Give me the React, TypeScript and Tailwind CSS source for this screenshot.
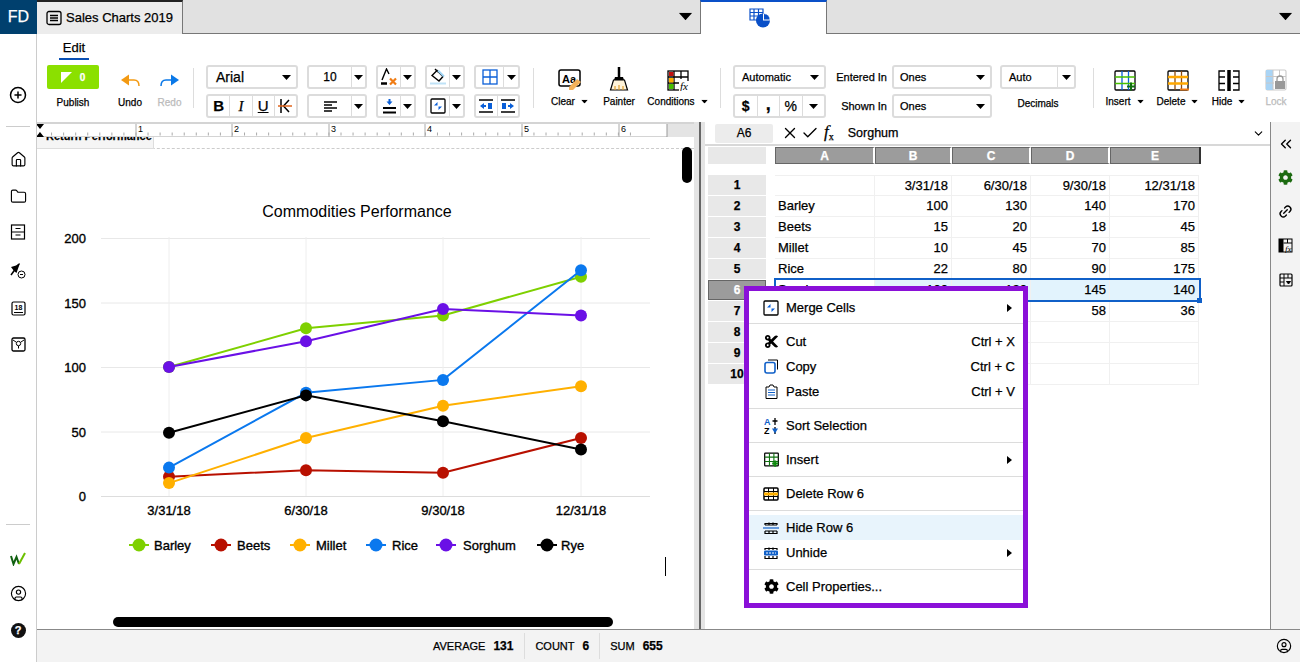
import type { ReactNode } from "react";
import { CirclePlus, House, Folder, CircleUser, Link2, ChevronDown, ChevronsLeft, X, Check } from "lucide-react";
import { FaCog, FaCut } from "react-icons/fa";

const Caret = ({ className = "" }: { className?: string }) => (
  <svg width="9" height="5" viewBox="0 0 9 5" className={className}>
    <path d="M0 0h9L4.5 5z" fill="#000" />
  </svg>
);

const Fx = () => (
  <span className="font-['Liberation_Serif'] italic text-[17px] leading-none text-black">
    f<sub className="text-[10px] not-italic">x</sub>
  </span>
);

// ---- toolbar icons ----
const icons: Record<string, ReactNode> = {
  doc: (
    <svg width="16" height="16" viewBox="0 0 16 16" fill="none" stroke="#000" strokeWidth="1.3">
      <rect x="1" y="1.5" width="14" height="13" rx="2" />
      <path d="M4 5.5h8M4 8h8M4 10.5h8" />
    </svg>
  ),
  sheetPie: (
    <svg width="22" height="20" viewBox="0 0 22 20">
      <path d="M1 1h13v11H1z" fill="#fff" stroke="#0a50c8" strokeWidth="1.2" />
      <path d="M1 4.5h13M1 8h13M5 1v11M9.5 1v11" stroke="#0a50c8" strokeWidth="1.2" />
      <circle cx="14" cy="12.5" r="7" fill="#0a50c8" />
      <path d="M14 12.5V5.5a7 7 0 0 1 7 7z" fill="#fff" />
      <path d="M15 11.5V6a6 6 0 0 1 5.5 5.5z" fill="#0a50c8" />
    </svg>
  ),
  undo: (
    <svg width="21" height="18" viewBox="0 0 21 18" fill="none">
      <path d="M1 7l8-5.5v11z" fill="#f39a12" />
      <path d="M8 7h6c3.5 0 5 2.5 5 6" stroke="#f39a12" strokeWidth="1.5" />
    </svg>
  ),
  redo: (
    <svg width="21" height="18" viewBox="0 0 21 18" fill="none">
      <path d="M20 7l-8-5.5v11z" fill="#0a78e8" />
      <path d="M13 7H7c-3.5 0-5 2.5-5 6" stroke="#0a78e8" strokeWidth="1.5" />
    </svg>
  ),
  textColor: (
    <svg width="18" height="18" viewBox="0 0 18 18" fill="none">
      <path d="M2 12L6.5 1 9 6" stroke="#000" strokeWidth="1.4" />
      <path d="M1 15.5h6" stroke="#000" strokeWidth="2.5" />
      <path d="M10 10.5l6 6M16 10.5l-6 6" stroke="#f07c14" strokeWidth="2.2" />
    </svg>
  ),
  fill: (
    <svg width="18" height="18" viewBox="0 0 18 18" fill="none">
      <path d="M3 7.5l5-5 6 6-4 4.5z" stroke="#000" strokeWidth="1.4" />
      <path d="M6 1l3 3" stroke="#000" strokeWidth="1.4" />
      <path d="M9 2.5l6 6" stroke="#9fd4f5" strokeWidth="2" />
      <path d="M1 15.5h16" stroke="#bfe2f7" strokeWidth="2" />
    </svg>
  ),
  border: (
    <svg width="16" height="16" viewBox="0 0 16 16" fill="none" stroke="#0a5fd8" strokeWidth="1.3">
      <rect x="1" y="1" width="14" height="14" />
      <path d="M8 1v14M1 8h14" />
    </svg>
  ),
  strike: (
    <svg width="14" height="14" viewBox="0 0 14 14" fill="none" strokeWidth="1.5">
      <path d="M3 0v14M11 1L5.5 7l5.5 6" stroke="#000" />
      <path d="M0 7h14" stroke="#e0641c" />
    </svg>
  ),
  align: (
    <svg width="13" height="11" viewBox="0 0 13 11" stroke="#000" strokeWidth="1.5">
      <path d="M0 1h13M0 4h8M0 7h13M0 10h8" />
    </svg>
  ),
  valign: (
    <svg width="13" height="15" viewBox="0 0 13 15">
      <path d="M6.5 6L3.5 2.5h2V0h2v2.5h2z" fill="#0a5fd8" />
      <path d="M0 9h13M0 13.5h13" stroke="#000" strokeWidth="1.8" />
    </svg>
  ),
  merge: (
    <svg width="16" height="16" viewBox="0 0 16 16" fill="none">
      <rect x="1" y="1" width="14" height="14" rx="1" stroke="#000" strokeWidth="1.3" />
      <path d="M4 7.5L7.5 4v3.5zM12 8.5L8.5 12V8.5z" fill="#0a5fd8" />
    </svg>
  ),
  indentL: (
    <svg width="14" height="14" viewBox="0 0 14 14">
      <path d="M0 1h14M0 13h14" stroke="#000" strokeWidth="1.5" />
      <path d="M1 7l4-3v6z M5 6h2v2H5z" fill="#0a5fd8" />
      <path d="M9 4h4v6H9z" fill="#0a5fd8" />
    </svg>
  ),
  indentR: (
    <svg width="14" height="14" viewBox="0 0 14 14">
      <path d="M0 1h14M0 13h14" stroke="#000" strokeWidth="1.5" />
      <path d="M13 7l-4-3v6z M7 6h2v2H7z" fill="#0a5fd8" />
      <path d="M1 4h4v6H1z" fill="#0a5fd8" />
    </svg>
  ),
  clear: (
    <svg width="24" height="22" viewBox="0 0 24 22" fill="none">
      <rect x="1" y="1" width="21" height="16" rx="2" stroke="#000" strokeWidth="1.5" />
      <text x="4" y="13.5" fontSize="11" fontWeight="700" fill="#000" fontFamily="Liberation Sans">Aa</text>
      <path d="M11 18l8-8 4 3-8 8h-4z" fill="#f3b15a" />
    </svg>
  ),
  painter: (
    <svg width="20" height="24" viewBox="0 0 20 24" fill="none">
      <path d="M10 0v10" stroke="#000" strokeWidth="2.5" />
      <path d="M6 10h8l1 3H5z" fill="#000" />
      <path d="M4.5 13h11l3 10h-17z" fill="#fff3d8" stroke="#000" strokeWidth="1.2" />
      <path d="M6 23v-4M10 23v-5M14 23v-4" stroke="#e0a030" strokeWidth="1.2" />
    </svg>
  ),
  conditions: (
    <svg width="22" height="21" viewBox="0 0 22 21" fill="none">
      <rect x="1" y="1" width="20" height="19" stroke="#000" strokeWidth="1.3" />
      <path d="M7 1v19M14 1v8M1 7h20M1 13h13" stroke="#000" strokeWidth="1.3" />
      <rect x="2" y="2" width="4.5" height="4" fill="#c01010" />
      <rect x="2" y="8" width="4.5" height="4.5" fill="#ffb000" />
      <rect x="2" y="14" width="4.5" height="5" fill="#46c000" />
      <rect x="12" y="11" width="10" height="10" fill="#fff" />
      <text x="13" y="20" fontSize="11" fontStyle="italic" fill="#000" fontFamily="Liberation Serif">fx</text>
    </svg>
  ),
  insert: (
    <svg width="22" height="21" viewBox="0 0 22 21" fill="none">
      <rect x="1" y="1" width="20" height="19" rx="1" stroke="#000" strokeWidth="1.3" />
      <path d="M8 1v19M14.5 1v19" stroke="#0a5fd8" strokeWidth="1.3" />
      <path d="M1 7h20M1 13.5h20" stroke="#46c000" strokeWidth="1.5" />
      <path d="M13 16.5h8M17 12.5v8" stroke="#107010" strokeWidth="2" />
    </svg>
  ),
  del: (
    <svg width="22" height="21" viewBox="0 0 22 21" fill="none">
      <rect x="1" y="1" width="20" height="19" rx="1" stroke="#000" strokeWidth="1.3" />
      <path d="M8 1v19M14.5 1v19" stroke="#8a4a10" strokeWidth="1.3" />
      <path d="M1 7h20M1 13.5h20" stroke="#ffa800" strokeWidth="2.5" />
      <path d="M13 19.5h9" stroke="#f07c14" strokeWidth="2" />
    </svg>
  ),
  hide: (
    <svg width="22" height="21" viewBox="0 0 22 21" fill="none" stroke="#000" strokeWidth="1.3">
      <path d="M7 1H1v19h6M15 1h6v19h-6" />
      <path d="M1 7h6M1 13.5h6M15 7h6M15 13.5h6" />
      <path d="M11 0v21" strokeWidth="3.5" />
    </svg>
  ),
  lock: (
    <svg width="22" height="22" viewBox="0 0 22 22" fill="none">
      <rect x="1" y="1" width="20" height="20" rx="1.5" stroke="#ccc" strokeWidth="1.2" />
      <rect x="1" y="1" width="7" height="20" fill="#a9d4f5" />
      <path d="M1 7.5h20M1 14h8M8 1v20M14.5 1v6" stroke="#c8c8c8" />
      <path d="M12 12v-2a3 3 0 0 1 6 0v2" stroke="#999" strokeWidth="1.3" />
      <rect x="10" y="12" width="10" height="8" fill="#999" />
    </svg>
  ),
};

// ---- small toolbar parts ----
const Box = ({ w, children, className = "" }: { w: string; children: ReactNode; className?: string }) => (
  <div className={`${w} h-[24px] flex items-stretch border-2 border-[#dcdcdc] rounded-[3px] bg-white ${className}`}>{children}</div>
);

const Seg = ({ children, className = "" }: { children: ReactNode; className?: string }) => (
  <div className={`flex items-center justify-center border-l border-[#dcdcdc] first:border-l-0 ${className}`}>{children}</div>
);

const IconDrop = ({ w, icon, split }: { w: string; icon: ReactNode; split: string }) => (
  <Box w={w}>
    <Seg className={split}>{icon}</Seg>
    <Seg className="flex-1"><Caret /></Seg>
  </Box>
);

const Select = ({ w, label, pad = "pl-[6px] pr-[5px]" }: { w: string; label: string; pad?: string }) => (
  <Box w={w}>
    <div className={`flex-1 flex items-center justify-between text-[12px] ${pad}`}>
      <span>{label}</span>
      <Caret />
    </div>
  </Box>
);

const Divider = ({ className }: { className: string }) => <div className={`w-px h-[40px] mt-[3px] bg-[#ddd] ${className}`} />;

const BigTool = ({ w, icon, label, menu, muted }: { w: string; icon: ReactNode; label: string; menu?: boolean; muted?: boolean }) => (
  <div className={`${w} flex flex-col items-center`}>
    <div className="h-[26px] flex items-end">{icon}</div>
    <div className={`mt-[3px] h-[14px] flex items-center gap-[5px] text-[10px] ${muted ? "text-[#bbb]" : "text-black"}`}>
      {label}
      {menu && <Caret className="scale-75" />}
    </div>
  </div>
);

const Ribbon = () => (
  <div className="h-[88px] shrink-0 bg-white flex flex-col">
    <div className="h-[31px] shrink-0 pl-[22px] pt-[7px]">
      <div className="w-[30px] h-[19px] border-b-2 border-[#0a50b4] text-center text-[13px] leading-[14px]">Edit</div>
    </div>
    <div className="flex pl-[10px]">
      <div className="w-[52px] flex flex-col items-center">
        <div className="w-full h-[24px] bg-[#8be000] rounded-[2px] flex items-center justify-center gap-[8px]">
          <svg width="11" height="11" viewBox="0 0 11 11"><path d="M0 0h11L0 11z" fill="#fff" /></svg>
          <span className="text-white text-[10px] font-bold">0</span>
        </div>
        <div className="mt-[6px] text-[10px]">Publish</div>
      </div>
      <div className="w-[40px] ml-[11px] flex flex-col items-center">
        <div className="h-[24px] flex items-end mt-[2px]">{icons.undo}</div>
        <div className="mt-[4px] text-[10px]">Undo</div>
      </div>
      <div className="w-[39px] flex flex-col items-center">
        <div className="h-[24px] flex items-end mt-[2px]">{icons.redo}</div>
        <div className="mt-[4px] text-[10px] text-[#bbb]">Redo</div>
      </div>
      <Divider className="ml-[4px]" />
      <div className="ml-[12px] w-[92px] flex flex-col gap-[5px]">
        <Select w="w-full" label="Arial" pad="pl-[8px] pr-[5px] text-[14px]" />
        <Box w="w-full">
          <Seg className="flex-1 font-bold text-[15px]">B</Seg>
          <Seg className="flex-1 italic text-[15px] font-['Liberation_Serif']">I</Seg>
          <Seg className="flex-1 underline text-[15px]">U</Seg>
          <Seg className="flex-1">{icons.strike}</Seg>
        </Box>
      </div>
      <div className="ml-[9px] w-[60px] flex flex-col gap-[5px]">
        <Box w="w-full">
          <Seg className="w-[42px] text-[12px]">10</Seg>
          <Seg className="flex-1"><Caret /></Seg>
        </Box>
        <IconDrop w="w-full" icon={icons.align} split="w-[42px]" />
      </div>
      <div className="ml-[9px] w-[40px] flex flex-col gap-[5px]">
        <IconDrop w="w-full" icon={icons.textColor} split="w-[22px]" />
        <IconDrop w="w-full" icon={icons.valign} split="w-[22px]" />
      </div>
      <div className="ml-[9px] w-[40px] flex flex-col gap-[5px]">
        <IconDrop w="w-full" icon={icons.fill} split="w-[22px]" />
        <IconDrop w="w-full" icon={icons.merge} split="w-[22px]" />
      </div>
      <div className="ml-[9px] w-[46px] flex flex-col gap-[5px]">
        <IconDrop w="w-full" icon={icons.border} split="w-[27px]" />
        <Box w="w-full">
          <Seg className="flex-1">{icons.indentL}</Seg>
          <Seg className="flex-1">{icons.indentR}</Seg>
        </Box>
      </div>
      <Divider className="ml-[13px]" />
      <BigTool w="w-[48px] ml-[12px]" icon={icons.clear} label="Clear" menu />
      <BigTool w="w-[46px] ml-[2px]" icon={icons.painter} label="Painter" />
      <BigTool w="w-[66px] ml-[3px]" icon={icons.conditions} label="Conditions" menu />
      <Divider className="ml-[9px]" />
      <div className="ml-[12px] w-[93px] flex flex-col gap-[5px]">
        <Select w="w-full" label="Automatic" pad="pl-[7px] pr-[5px] !text-[11px]" />
        <Box w="w-full">
          <Seg className="flex-1 text-[14px] font-bold">$</Seg>
          <Seg className="flex-1 text-[18px] font-bold leading-none pb-[4px]">,</Seg>
          <Seg className="flex-1 text-[14px]">%</Seg>
          <Seg className="flex-1"><Caret /></Seg>
        </Box>
      </div>
      <div className="ml-[10px] w-[156px] flex flex-col gap-[5px]">
        <div className="flex items-center justify-end gap-[5px]">
          <span className="text-[11px] whitespace-nowrap">Entered In</span>
          <Select w="w-[100px]" label="Ones" pad="pl-[6px] pr-[5px] !text-[11px]" />
        </div>
        <div className="flex items-center justify-end gap-[5px]">
          <span className="text-[11px] whitespace-nowrap">Shown In</span>
          <Select w="w-[100px]" label="Ones" pad="pl-[6px] pr-[5px] !text-[11px]" />
        </div>
      </div>
      <div className="ml-[8px] w-[76px] flex flex-col items-center">
        <Box w="w-full">
          <Seg className="flex-1 text-[11px] justify-start pl-[7px]">Auto</Seg>
          <Seg className="w-[17px]"><Caret /></Seg>
        </Box>
        <div className="mt-[7px] text-[10px]">Decimals</div>
      </div>
      <Divider className="ml-[17px]" />
      <BigTool w="w-[50px] ml-[6px]" icon={icons.insert} label="Insert" menu />
      <BigTool w="w-[50px] ml-[3px]" icon={icons.del} label="Delete" menu />
      <BigTool w="w-[50px] ml-[1px]" icon={icons.hide} label="Hide" menu />
      <BigTool w="w-[44px]" icon={icons.lock} label="Lock" muted />
    </div>
  </div>
);

// ---- left rail ----
const Rail = () => (
  <div className="w-[37px] h-full shrink-0 border-r border-[#ccc] flex flex-col items-center bg-white">
    <div className="w-[37px] h-[34px] -mr-px bg-[#00406e] text-white text-[16px] flex items-center justify-center">FD</div>
    <CirclePlus size={18} strokeWidth={2} className="mt-[52px]" />
    <div className="w-[24px] h-px bg-[#ccc] mt-[22px]" />
    <House size={17} strokeWidth={1.6} className="mt-[24px]" />
    <Folder size={17} strokeWidth={1.6} className="mt-[20px]" />
    <svg width="16" height="16" viewBox="0 0 16 16" fill="none" stroke="#000" strokeWidth="1.2" className="mt-[19px]">
      <rect x="1.5" y="1" width="13" height="14" />
      <path d="M1.5 8h13M5.5 4.5h5M5.5 11h5" />
    </svg>
    <svg width="16" height="16" viewBox="0 0 16 16" className="mt-[23px]">
      <path d="M1 4l5-1.5 4-2.5-3.5 10L4 8z" fill="#000" />
      <path d="M1 12L9 1" stroke="#000" strokeWidth="1.5" />
      <circle cx="11.5" cy="11.5" r="3.5" fill="#fff" stroke="#000" />
      <path d="M10 11.5h3" stroke="#000" />
    </svg>
    <svg width="15" height="15" viewBox="0 0 15 15" fill="none" className="mt-[22px]">
      <rect x="1" y="1" width="13" height="13" rx="1.5" stroke="#000" strokeWidth="1.2" />
      <path d="M3 11.5h9" stroke="#000" />
      <text x="3.5" y="9" fontSize="7" fontWeight="700" fill="#000" fontFamily="Liberation Sans">18</text>
    </svg>
    <svg width="15" height="15" viewBox="0 0 15 15" fill="none" stroke="#000" className="mt-[21px]">
      <rect x="1" y="1" width="13" height="13" rx="1.5" strokeWidth="1.3" />
      <path d="M2 3l3 2M13 3l-3 2" />
      <circle cx="7.5" cy="6.5" r="2.2" />
      <path d="M7.5 9v2.5" />
    </svg>
    <div className="w-[24px] h-px bg-[#ccc] mt-[172px]" />
    <svg width="16" height="14" viewBox="0 0 16 14" fill="none" strokeWidth="2" className="mt-[27px]">
      <path d="M1 4l2.5 8 3-7 2.5 7" stroke="#106010" />
      <path d="M9 12L15 1" stroke="#6cc000" />
    </svg>
    <CircleUser size={17} strokeWidth={1.6} className="mt-[19px]" />
    <div className="mt-[21px] w-[15px] h-[15px] rounded-full bg-[#111] text-white text-[11px] font-bold flex items-center justify-center">?</div>
  </div>
);

// ---- document pane ----
const Ruler = () => {
  const inches = [136, 232, 329, 425, 522, 619];
  const ticks = Array.from({ length: 50 }, (_, i) => 39.5 + i * 12.06);
  return (
    <div className="h-[15px] shrink-0 bg-white flex border-t-2 border-[#d4d4d4] border-b border-b-[#d4d4d4]">
      <svg width="657" height="13" viewBox="37 123 657 13" className="block">
        <rect x="667" y="123" width="27" height="13" fill="#e4e4e4" />
        {ticks.map((x) => (
          <path key={x} d={`M${x} 131.5V134.5`} stroke="#aaa" />
        ))}
        {inches.map((x, i) => (
          <g key={x}>
            <path d={`M${x} 123V136`} stroke="#aaa" />
            <text x={x + 2} y="131" fontSize="9" fontFamily="Liberation Sans" fill="#000">{i + 1}</text>
          </g>
        ))}
        <path d="M667 123V136" stroke="#999" />
        <path d="M36 123h8l-4 5zM36 136h8l-4-5z" fill="#000" />
      </svg>
    </div>
  );
};

const xs = [169, 306, 443, 581];
const yOf = (v: number) => 496 - v * 1.29;
const series = [
  { name: "Barley", color: "#7ed000", data: [100, 130, 140, 170], lx: 139, tx: 154 },
  { name: "Beets", color: "#b81000", data: [15, 20, 18, 45], lx: 221, tx: 237 },
  { name: "Millet", color: "#ffb000", data: [10, 45, 70, 85], lx: 300, tx: 316 },
  { name: "Rice", color: "#0a78ee", data: [22, 80, 90, 175], lx: 376, tx: 392 },
  { name: "Sorghum", color: "#6a10e6", data: [100, 120, 145, 140], lx: 446, tx: 463 },
  { name: "Rye", color: "#000", data: [49, 78, 58, 36], lx: 547, tx: 561 },
];

const Chart = () => (
  <svg width="657" height="480" viewBox="37 149 657 480" className="block font-['Liberation_Sans']">
    <text x="357" y="217" textAnchor="middle" fontSize="16" fill="#000">Commodities Performance</text>
    {[0, 50, 100, 150, 200].map((v) => (
      <g key={v}>
        <path d={`M101 ${yOf(v) + 0.5}H650`} stroke={v === 0 ? "#ddd" : "#e8e8e8"} />
        <text x="86" y={yOf(v) + 5} textAnchor="end" fontSize="13" fill="#000" stroke="#000" strokeWidth="0.35">{v}</text>
      </g>
    ))}
    {xs.map((x, i) => (
      <g key={x}>
        <path d={`M${x} 237V496`} stroke="#eee" />
        <text x={x} y="515" textAnchor="middle" fontSize="13" fill="#000" stroke="#000" strokeWidth="0.35">{["3/31/18", "6/30/18", "9/30/18", "12/31/18"][i]}</text>
      </g>
    ))}
    {series.map((s) => (
      <g key={s.name}>
        <polyline points={s.data.map((v, i) => `${xs[i]},${yOf(v)}`).join(" ")} fill="none" stroke={s.color} strokeWidth="2" />
        {s.data.map((v, i) => (
          <circle key={i} cx={xs[i]} cy={yOf(v)} r="6" fill={s.color} />
        ))}
        <path d={`M${s.lx - 10} 545h20`} stroke={s.color} strokeWidth="2" />
        <circle cx={s.lx} cy="545" r="6.5" fill={s.color} />
        <text x={s.tx} y="549.5" fontSize="13" fill="#000" stroke="#000" strokeWidth="0.35">{s.name}</text>
      </g>
    ))}
  </svg>
);

const DocPane = () => (
  <div className="w-[657px] shrink-0 h-full flex flex-col">
    <Ruler />
    <div className="relative flex-1 overflow-hidden bg-white">
      <div className="h-[12px] border-b border-dashed border-[#ccc]">
        <div className="w-[117px] h-[12px] bg-[#f5f5f5] border-r border-b border-[#ddd] overflow-hidden">
          <div className="pl-[9px] -mt-[8px] text-[11px] leading-[14px] font-bold whitespace-nowrap">Return Performance</div>
        </div>
      </div>
      <Chart />
      <div className="absolute left-[645px] top-[10px] w-[10px] h-[36px] rounded-full bg-black" />
      <div className="absolute left-[76px] top-[480px] w-[500px] h-[10px] rounded-full bg-black" />
      <div className="absolute left-[628px] top-[420px] w-px h-[19px] bg-black" />
    </div>
  </div>
);

// ---- spreadsheet ----
const rows = [
  ["", "3/31/18", "6/30/18", "9/30/18", "12/31/18"],
  ["Barley", "100", "130", "140", "170"],
  ["Beets", "15", "20", "18", "45"],
  ["Millet", "10", "45", "70", "85"],
  ["Rice", "22", "80", "90", "175"],
  ["Sorghum", "100", "120", "145", "140"],
  ["Rye", "49", "78", "58", "36"],
  ["", "", "", "", ""],
  ["", "", "", "", ""],
  ["", "", "", "", ""],
];
const widths = ["w-[100px]", "w-[77px]", "w-[79px]", "w-[79px]", "w-[89px]"];

const Grid = () => (
  <div className="flex-1 bg-white flex flex-col relative text-[13px] overflow-hidden">
    <div className="h-[24px] shrink-0 flex items-center pl-[10px] border-b-2 border-[#d8d8d8]">
      <div className="w-[58px] h-[19px] bg-[#ececec] rounded-[2px] flex items-center justify-center text-[12px]">A6</div>
      <X size={18} strokeWidth={1.8} className="ml-[8px]" />
      <Check size={18} strokeWidth={1.8} className="ml-[2px]" />
      <span className="ml-[5px]"><Fx /></span>
      <span className="ml-[14px] text-[12.5px]">Sorghum</span>
      <ChevronDown size={13} strokeWidth={2} className="ml-auto mr-[5px]" />
    </div>
    <div className="flex mt-[1px] pl-[3px] h-[17px] shrink-0">
      <div className="w-[58px] bg-[#e8e8e8]" />
      <div className="ml-[9px] flex border-r-2 border-[#333]">
        {["A", "B", "C", "D", "E"].map((c, i) => (
          <div key={c} className={`${widths[i]} bg-[#9c9c9c] border border-[#666] border-r-2 border-r-white last:border-r-0 text-white font-bold text-[12px] flex items-center justify-center`}>{c}</div>
        ))}
      </div>
    </div>
    <div className="mt-[11px] flex flex-col pl-[3px]">
      {rows.map((r, i) => (
        <div key={i} className="flex h-[21px]">
          <div className={`w-[58px] h-[20px] font-bold text-[12px] flex items-center justify-center ${i === 5 ? "bg-[#9c9c9c] text-white border border-[#666]" : "bg-[#e8e8e8]"}`}>{i + 1}</div>
          <div className="ml-[9px] flex">
            {r.map((c, j) => (
              <div
                key={j}
                className={`${widths[j]} border-b border-r border-[#f0f0f0] px-[3px] flex items-center ${j === 0 ? "justify-start" : "justify-end"} ${i === 5 && j > 0 ? "bg-[#e2f3fd]" : ""} ${i === 0 ? "border-t" : ""}`}
              >
                {c}
              </div>
            ))}
          </div>
        </div>
      ))}
    </div>
    <div className="absolute left-[69px] top-[156px] w-[427px] h-[24px] border-2 border-[#1060c8]">
      <div className="absolute -right-[3px] -bottom-[3px] w-[5px] h-[5px] bg-[#1060c8]" />
    </div>
  </div>
);

// ---- context menu ----
const MenuRow = ({ icon, label, keys, more, active }: { icon: ReactNode; label: string; keys?: string; more?: boolean; active?: boolean }) => (
  <div className={`h-[25px] flex items-center pl-[14px] pr-[8px] text-[13px] ${active ? "bg-[#e8f4fc]" : ""}`}>
    <div className="w-[16px] flex justify-center">{icon}</div>
    <span className="ml-[7px] flex-1">{label}</span>
    {keys && <span>{keys}</span>}
    {more && (
      <svg width="5" height="8" viewBox="0 0 5 8" className="mr-[3px]"><path d="M0 0l5 4-5 4z" fill="#000" /></svg>
    )}
  </div>
);

const MiniRows = ({ kind }: { kind: "del" | "hide" | "unhide" }) => (
  <svg width="16" height="14" viewBox="0 0 16 14" fill="none">
    {kind === "del" && <rect x="1" y="1" width="14" height="12" rx="1" stroke="#000" strokeWidth="1.5" />}
    {kind === "del" && <path d="M1 4.5h14M1 9.5h14M5.5 1v12M10.5 1v12" stroke="#000" />}
    {kind === "del" && <path d="M1 7h14" stroke="#ffb000" strokeWidth="3" />}
    {kind === "hide" && <path d="M2 4V2.5h12V4M2 4h12M2 10h12M2 10v2.5h12V10M6 1.5V4M10 1.5V4M6 10v3M10 10v3" stroke="#000" strokeWidth="1.2" />}
    {kind === "hide" && <path d="M0 7h16" stroke="#1060c8" strokeWidth="1.2" />}
    {kind === "unhide" && <path d="M2 4V2.5h12V4M2 10v2.5h12V10M6 1.5V4M10 1.5V4M6 10v3M10 10v3" stroke="#000" strokeWidth="1.2" />}
    {kind === "unhide" && <rect x="1" y="4.5" width="14" height="5" rx="1" fill="#1060c8" />}
    {kind === "unhide" && <path d="M3 7h10" stroke="#fff" strokeDasharray="2 1" />}
  </svg>
);

const ContextMenu = () => (
  <div className="absolute left-[744px] top-[286px] w-[284px] h-[322px] border-[5px] border-[#8a10d8] bg-white flex flex-col">
    <div className="pt-[4px] pb-[3px] border-b border-[#dcdcdc]">
      <MenuRow icon={icons.merge} label="Merge Cells" more />
    </div>
    <div className="pt-[5px] pb-[4px] border-b border-[#dcdcdc]">
      <MenuRow icon={<FaCut size={15} />} label="Cut" keys="Ctrl + X" />
      <MenuRow
        icon={
          <svg width="15" height="15" viewBox="0 0 15 15" fill="none">
            <path d="M4 1h9.5v9.5" stroke="#000" />
            <rect x="1" y="3.5" width="10" height="10.5" rx="2" stroke="#1060c8" strokeWidth="1.6" />
          </svg>
        }
        label="Copy"
        keys="Ctrl + C"
      />
      <MenuRow
        icon={
          <svg width="13" height="15" viewBox="0 0 13 15" fill="none" stroke="#000">
            <path d="M1 3h3l1-2h3l1 2h3v11.5H1z" />
            <path d="M3 6h7M3 8.5h7M3 11h7" stroke="#1060c8" />
          </svg>
        }
        label="Paste"
        keys="Ctrl + V"
      />
    </div>
    <div className="py-[4px] border-b border-[#dcdcdc]">
      <MenuRow
        icon={
          <svg width="15" height="16" viewBox="0 0 15 16">
            <text x="0" y="7" fontSize="9" fontWeight="700" fill="#1060c8" fontFamily="Liberation Sans">A</text>
            <text x="0" y="15.5" fontSize="9" fontWeight="700" fill="#000" fontFamily="Liberation Sans">Z</text>
            <path d="M8.5 3h5M11 0v7M11 9v7" stroke="#000" strokeWidth="1.3" />
            <path d="M8 10.5h6L11 15.500z" fill="#1060c8" />
          </svg>
        }
        label="Sort Selection"
      />
    </div>
    <div className="py-[4px] border-b border-[#dcdcdc]">
      <MenuRow
        icon={
          <svg width="15" height="15" viewBox="0 0 22 21" fill="none">
            <rect x="1" y="1" width="20" height="19" rx="1" stroke="#000" strokeWidth="1.8" />
            <path d="M8 1v19M14.5 1v19M1 7h20M1 13.5h20" stroke="#107010" strokeWidth="1.6" />
            <path d="M12 16.5h9M16.5 12v9" stroke="#0c8a0c" strokeWidth="3" />
          </svg>
        }
        label="Insert"
        more
      />
    </div>
    <div className="py-[4px] border-b border-[#dcdcdc]">
      <MenuRow icon={<MiniRows kind="del" />} label="Delete Row 6" />
    </div>
    <div className="pt-[4px] pb-[4px] border-b border-[#dcdcdc]">
      <MenuRow icon={<MiniRows kind="hide" />} label="Hide Row 6" active />
      <MenuRow icon={<MiniRows kind="unhide" />} label="Unhide" more />
    </div>
    <div className="pt-[4px]">
      <MenuRow icon={<FaCog size={15} />} label="Cell Properties..." />
    </div>
  </div>
);

const SideBar = () => (
  <div className="w-[30px] shrink-0 h-full bg-[#f3f3f3] border-l border-[#888] flex flex-col items-center pt-[13px]">
    <ChevronsLeft size={18} strokeWidth={1.8} />
    <FaCog size={15} color="#1c6a10" className="mt-[17px]" />
    <Link2 size={15} strokeWidth={2.2} className="mt-[19px] -rotate-45" />
    <svg width="15" height="15" viewBox="0 0 15 15" fill="none" className="mt-[19px]">
      <rect x="1" y="1" width="13" height="13" stroke="#000" />
      <rect x="1" y="1" width="4.5" height="13" fill="#000" />
      <path d="M5.5 5h8.5M9.5 1v4" stroke="#000" />
      <text x="7" y="13.5" fontSize="9" fontStyle="italic" fill="#000" fontFamily="Liberation Serif">fx</text>
    </svg>
    <svg width="14" height="14" viewBox="0 0 14 14" fill="none" stroke="#000" className="mt-[20px]">
      <rect x="1" y="1" width="12" height="12" rx="1" strokeWidth="1.2" />
      <path d="M1 5h12M5 1v4M9 1v4M5 5v8M1 9h4" />
      <path d="M7.5 8.5h4L9.5 11z" fill="#000" />
    </svg>
  </div>
);

const Stat = ({ label, value, className = "" }: { label: string; value: string; className?: string }) => (
  <div className={`h-[26px] flex items-center gap-[8px] text-[11px] ${className}`}>
    <span>{label}</span>
    <span className="font-bold text-[12px]">{value}</span>
  </div>
);

export default function App() {
  return (
    <div className="relative w-[1300px] h-[662px] flex overflow-hidden bg-white text-black font-['Liberation_Sans',sans-serif] [-webkit-text-stroke:0.25px]">
      <Rail />
      <div className="flex-1 min-w-0 flex flex-col">
        <div className="h-[34px] shrink-0 bg-[#e1e1e1] border-b border-[#777] flex">
          <div className="w-[146px] h-[34px] bg-[#ececec] border-r border-[#777] border-t-2 border-t-[#222] flex items-center pl-[9px] gap-[4px] text-[13px]">
            {icons.doc}
            <span>Sales Charts 2019</span>
          </div>
          <div className="w-[517px] flex items-center justify-end pr-[10px]"><Caret className="scale-150" /></div>
          <div className="w-[127px] h-[34px] bg-white border-x border-[#777] border-t-2 border-t-[#0a50c8] flex items-center justify-center pr-[8px]">{icons.sheetPie}</div>
          <div className="flex-1 flex items-center justify-end pr-[10px]"><Caret className="scale-150" /></div>
        </div>
        <Ribbon />
        <div className="flex-1 min-h-0 flex">
          <DocPane />
          <div className="w-[11px] shrink-0 bg-[#e4e4e4] flex justify-center">
            <div className="w-[2px] h-full bg-[#666]" />
          </div>
          <Grid />
          <SideBar />
        </div>
        <div className="h-[33px] shrink-0 bg-[#f3f3f3] border-t border-[#888] flex items-center pl-[396px]">
          <Stat label="AVERAGE" value="131" className="pr-[11px] border-r border-[#ddd]" />
          <Stat label="COUNT" value="6" className="px-[10px] border-r border-[#ddd]" />
          <Stat label="SUM" value="655" className="pl-[10px]" />
          <CircleUser size={16} strokeWidth={1.7} className="ml-auto mr-[8px]" />
        </div>
      </div>
      <ContextMenu />
    </div>
  );
}
